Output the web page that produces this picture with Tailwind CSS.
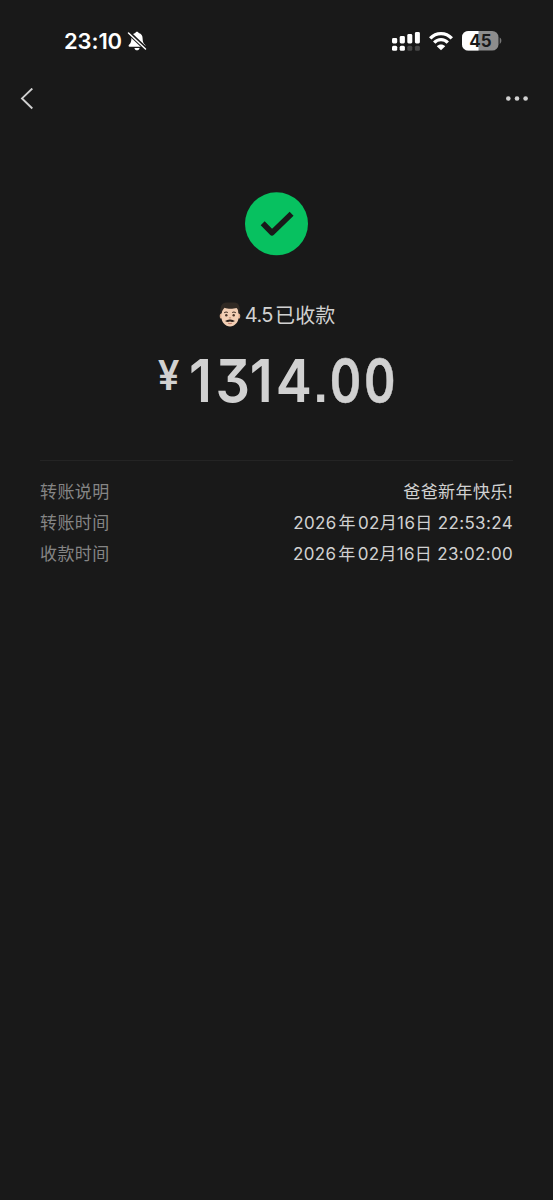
<!DOCTYPE html>
<html lang="zh-CN">
<head>
<meta charset="utf-8">
<meta name="viewport" content="width=device-width, initial-scale=1">
<title>转账详情</title>
<script src="https://cdn.jsdelivr.net/npm/@tailwindcss/browser@4"></script>
</head>
<body class="bg-[#191919]">
<main class="flex h-[1200px] w-[553px] flex-col overflow-hidden bg-[#191919] font-['Inter','Noto_Sans_CJK_SC',sans-serif] text-[#d1d1d1]">
  <header class="flex h-[82px] shrink-0 items-center justify-between pl-16 pr-[51px] text-white">
    <div class="flex items-center gap-[5px]">
      <span class="text-[22px] leading-7 font-semibold tracking-[-0.1px]">23:10</span>
      <svg class="h-5 w-5" viewBox="0 0 20 20">
        <path d="M10 .8c-.9 0-1.500.6-1.700 1.300C5.500 2.800 4.400 5 4.400 7.200c0 3.500-.8 5-2.400 6.600-.8.900-.5 1.900.6 1.900h14.800c1.100 0 1.400-1 .6-1.900-1.600-1.600-2.400-3.100-2.400-6.600 0-2.200-1.100-4.400-3.900-5.100C11.500 1.400 10.900.8 10 .8zM7.400 16.900h5.200c-.3 1.500-1.300 2.300-2.600 2.300s-2.300-.8-2.600-2.300z" fill="#fff"/>
        <path d="M1.700 1.800l17 16" stroke="#191919" stroke-width="4"/>
        <path d="M1.500 2l17 16" stroke="#fff" stroke-width="1.500" stroke-linecap="round"/>
      </svg>
    </div>
    <div class="flex items-center">
      <svg class="h-5 w-7" viewBox="0 0 28 20">
        <g fill="#fff"><rect x="0" y="7" width="5.200" height="5.500" rx="1.400"/><rect x="7.700" y="5" width="5.200" height="7.500" rx="1.400"/><rect x="15.300" y="3" width="5" height="9.500" rx="1.400"/><rect x="22.900" y="1" width="5" height="11.500" rx="1.400"/><rect x="0" y="14.700" width="5.200" height="5" rx="1.500"/><rect x="7.700" y="14.700" width="5.200" height="5" rx="1.500"/></g>
        <g fill="#484848"><rect x="15.300" y="14.700" width="5" height="5" rx="1.500"/><rect x="22.900" y="14.700" width="5" height="5" rx="1.500"/></g>
      </svg>
      <svg class="ml-[9px] h-5 w-6" viewBox="0 0 24 20">
        <g fill="none" stroke="#fff" stroke-width="3.300"><path d="M1.200 7.400C7.200 .9 16.800 .9 22.800 7.400"/><path d="M5.200 11.600c3.800-4 9.800-4 13.600 0"/></g>
        <path d="M12 19.200l-4.200-4c2.200-2.300 6.200-2.300 8.400 0z" fill="#fff"/>
      </svg>
      <svg class="ml-[9px] h-5 w-10" viewBox="0 0 40 20">
        <defs><clipPath id="battery"><rect x="0" y="0" width="36.500" height="19.500" rx="6.300"/></clipPath></defs>
        <g clip-path="url(#battery)"><rect width="37" height="20" fill="#8d8d8d"/><rect width="16.500" height="20" fill="#fff"/></g>
        <path d="M37.700 6.600c2.200.7 2.200 5.600 0 6.300z" fill="#777"/>
        <text x="18.400" y="15.800" text-anchor="middle" font-size="17" font-weight="700" fill="#191919">45</text>
      </svg>
    </div>
  </header>
  <nav class="flex h-[34px] shrink-0 items-center justify-between pl-5 pr-6">
    <svg class="h-[22px] w-[14px]" viewBox="0 0 14 22" fill="none" stroke="#d1d1d1" stroke-width="1.900"><path d="M12.300 .5L2 10.400 12.300 20.500"/></svg>
    <svg class="h-6 w-6" viewBox="0 0 24 24" fill="#d1d1d1"><circle cx="3.300" cy="11.500" r="2.300"/><circle cx="12" cy="11.500" r="2.300"/><circle cx="20.600" cy="11.500" r="2.300"/></svg>
  </nav>
  <section class="flex shrink-0 flex-col items-center pt-[76px]">
    <svg class="h-16 w-16" viewBox="0 0 64 64"><circle cx="31.500" cy="31.800" r="31.500" fill="#07c160"/><path d="M17.700 31.200l9.300 9.500 19.600-19" fill="none" stroke="#191919" stroke-width="5.600" stroke-linejoin="round"/></svg>
    <div class="mt-[44px] flex h-[30px] items-center pl-px text-xl leading-[30px]">
      <svg class="mr-[4px] mb-px h-[25px] w-[22px]" viewBox="0 0 22 24" preserveAspectRatio="none">
        <ellipse cx="2" cy="13.500" rx="1.300" ry="2.500" fill="#d9a98a"/><ellipse cx="20" cy="13.500" rx="1.300" ry="2.500" fill="#d9a98a"/>
        <path d="M2.300 9C2.300 3 6 1.500 11 1.500S19.700 3 19.700 9v5c0 5.500-4 9.500-8.700 9.500S2.300 19.500 2.300 14z" fill="#f3cfb4"/>
        <path d="M1.500 11C.8 4 3 .5 7.500 .5h8c4.500 0 6 4.500 5 10.500l-1.100-.5c-.1-2.600-.8-4.200-1.900-4.800-3 .8-8.500 1.200-11.900-.2C4 7 3 8.500 2.800 10.500z" fill="#302923"/>
        <path d="M5.200 10.500q1.800-1.500 3.600-.3M13.200 10.200q1.800-1.200 3.600.3" stroke="#48352a" fill="none"/>
        <circle cx="7.300" cy="12.700" r="1.200" fill="#4b3529"/><circle cx="14.700" cy="12.700" r="1.200" fill="#4b3529"/>
        <path d="M10 15q1 .7 2 0" stroke="#bd8066" fill="none"/>
        <path d="M6 18.300c2-.5 3-1.700 5-1.400 2-.3 3 .9 5 1.400-2 1.200-3.600.9-5 .5-1.400.4-3 .7-5-.5z" fill="#2c211c"/>
        <path d="M9 20.300q2 .9 4 0" stroke="#c98472" fill="none"/>
      </svg>
      <span class="tracking-[-0.5px]">4.5</span><span class="ml-[2px] pt-px tracking-[0.1px]">已收款</span>
    </div>
    <svg class="mt-2 h-[84px] w-[246px] overflow-visible" viewBox="0 0 246 84" fill="#d1d1d1">
      <text text-anchor="middle" font-size="41.500" font-weight="600" transform="translate(14.500 51.500) scale(.93 1)">¥</text>
      <g transform="translate(-1.700 63.500)">
        <text font-size="59.500" font-weight="600" text-anchor="middle" x="52.800 88.500 119.700 155.500" transform="scale(.91 1)" style="font-feature-settings:'cv09'">1314</text>
        <text class="font-['Liberation_Sans']" font-size="50" font-weight="700" text-anchor="middle" x="168.300">.</text>
        <text font-size="58.500" font-weight="600" text-anchor="middle" x="237 279" transform="scale(.815 1)" stroke="#d1d1d1" stroke-width=".5">00</text>
      </g>
    </svg>
  </section>
  <section class="mx-10 mt-[38px] border-t border-[#242424] pt-4 text-[17px] leading-[31px]">
    <div class="flex justify-between"><span class="tracking-[0.4px] text-[#858585]">转账说明</span><span class="tracking-[0.4px]">爸爸新年快乐!</span></div>
    <div class="flex justify-between"><span class="tracking-[0.4px] text-[#858585]">转账时间</span><span class="tracking-[0.350px]">2026<span class="mx-[2px]">年</span>02月16日 22:53:24</span></div>
    <div class="flex justify-between"><span class="tracking-[0.4px] text-[#858585]">收款时间</span><span class="tracking-[0.320px]">2026<span class="mx-[2px]">年</span>02月16日 23:02:00</span></div>
  </section>
</main>
</body>
</html>
